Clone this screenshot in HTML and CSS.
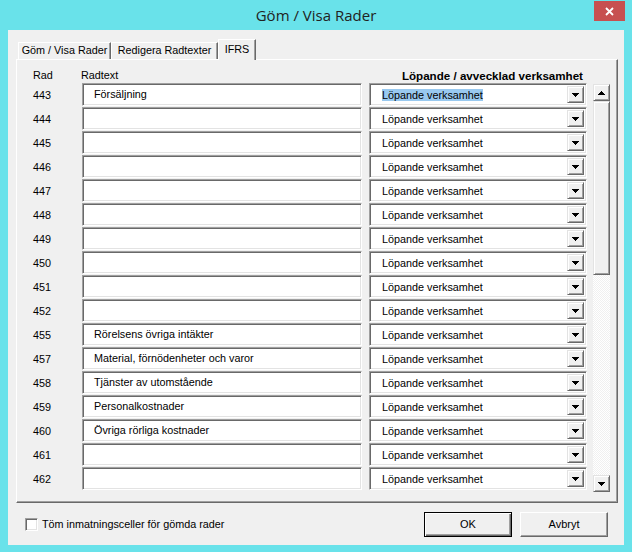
FILE: index.html
```html
<!DOCTYPE html>
<html lang="sv">
<head>
<meta charset="utf-8">
<title>Göm / Visa Rader</title>
<link rel="stylesheet" href="styles.css">
</head>
<body>
<div class="window">
  <div class="titlebar">
    <span class="tb-spacer"></span>
    <div class="title">Göm / Visa Rader</div>
    <div class="tb-right">
      <button class="close" aria-label="Stäng">
        <svg width="9" height="9" viewBox="0 0 9 9"><path d="M1 1L8 8M8 1L1 8" stroke="#fff" stroke-width="1.8" fill="none"/></svg>
      </button>
    </div>
  </div>
  <div class="client">
    <div class="tabs">
      <div class="tab t1">Göm / Visa Rader</div>
      <div class="tab t2">Redigera Radtexter</div>
      <div class="tab t3 active">IFRS</div>
    </div>
    <div class="panel">
      <div class="list">
        <div class="head">
          <span class="h-num">Rad</span>
          <span class="h-txt">Radtext</span>
          <span class="h-dd">Löpande / avvecklad verksamhet</span>
        </div>
        <div class="row"><span class="num">443</span><div class="txt">Försäljning</div><div class="dd"><span class="dd-text"><span class="sel">Löpande verksamhet</span></span><span class="dd-btn"><svg width="7" height="4" viewBox="0 0 7 4" shape-rendering="crispEdges"><path d="M0 0h7v1H0zM1 1h5v1H1zM2 2h3v1H2zM3 3h1v1H3z"/></svg></span></div></div>
        <div class="row"><span class="num">444</span><div class="txt"></div><div class="dd"><span class="dd-text">Löpande verksamhet</span><span class="dd-btn"><svg width="7" height="4" viewBox="0 0 7 4" shape-rendering="crispEdges"><path d="M0 0h7v1H0zM1 1h5v1H1zM2 2h3v1H2zM3 3h1v1H3z"/></svg></span></div></div>
        <div class="row"><span class="num">445</span><div class="txt"></div><div class="dd"><span class="dd-text">Löpande verksamhet</span><span class="dd-btn"><svg width="7" height="4" viewBox="0 0 7 4" shape-rendering="crispEdges"><path d="M0 0h7v1H0zM1 1h5v1H1zM2 2h3v1H2zM3 3h1v1H3z"/></svg></span></div></div>
        <div class="row"><span class="num">446</span><div class="txt"></div><div class="dd"><span class="dd-text">Löpande verksamhet</span><span class="dd-btn"><svg width="7" height="4" viewBox="0 0 7 4" shape-rendering="crispEdges"><path d="M0 0h7v1H0zM1 1h5v1H1zM2 2h3v1H2zM3 3h1v1H3z"/></svg></span></div></div>
        <div class="row"><span class="num">447</span><div class="txt"></div><div class="dd"><span class="dd-text">Löpande verksamhet</span><span class="dd-btn"><svg width="7" height="4" viewBox="0 0 7 4" shape-rendering="crispEdges"><path d="M0 0h7v1H0zM1 1h5v1H1zM2 2h3v1H2zM3 3h1v1H3z"/></svg></span></div></div>
        <div class="row"><span class="num">448</span><div class="txt"></div><div class="dd"><span class="dd-text">Löpande verksamhet</span><span class="dd-btn"><svg width="7" height="4" viewBox="0 0 7 4" shape-rendering="crispEdges"><path d="M0 0h7v1H0zM1 1h5v1H1zM2 2h3v1H2zM3 3h1v1H3z"/></svg></span></div></div>
        <div class="row"><span class="num">449</span><div class="txt"></div><div class="dd"><span class="dd-text">Löpande verksamhet</span><span class="dd-btn"><svg width="7" height="4" viewBox="0 0 7 4" shape-rendering="crispEdges"><path d="M0 0h7v1H0zM1 1h5v1H1zM2 2h3v1H2zM3 3h1v1H3z"/></svg></span></div></div>
        <div class="row"><span class="num">450</span><div class="txt"></div><div class="dd"><span class="dd-text">Löpande verksamhet</span><span class="dd-btn"><svg width="7" height="4" viewBox="0 0 7 4" shape-rendering="crispEdges"><path d="M0 0h7v1H0zM1 1h5v1H1zM2 2h3v1H2zM3 3h1v1H3z"/></svg></span></div></div>
        <div class="row"><span class="num">451</span><div class="txt"></div><div class="dd"><span class="dd-text">Löpande verksamhet</span><span class="dd-btn"><svg width="7" height="4" viewBox="0 0 7 4" shape-rendering="crispEdges"><path d="M0 0h7v1H0zM1 1h5v1H1zM2 2h3v1H2zM3 3h1v1H3z"/></svg></span></div></div>
        <div class="row"><span class="num">452</span><div class="txt"></div><div class="dd"><span class="dd-text">Löpande verksamhet</span><span class="dd-btn"><svg width="7" height="4" viewBox="0 0 7 4" shape-rendering="crispEdges"><path d="M0 0h7v1H0zM1 1h5v1H1zM2 2h3v1H2zM3 3h1v1H3z"/></svg></span></div></div>
        <div class="row"><span class="num">455</span><div class="txt">Rörelsens övriga intäkter</div><div class="dd"><span class="dd-text">Löpande verksamhet</span><span class="dd-btn"><svg width="7" height="4" viewBox="0 0 7 4" shape-rendering="crispEdges"><path d="M0 0h7v1H0zM1 1h5v1H1zM2 2h3v1H2zM3 3h1v1H3z"/></svg></span></div></div>
        <div class="row"><span class="num">457</span><div class="txt">Material, förnödenheter och varor</div><div class="dd"><span class="dd-text">Löpande verksamhet</span><span class="dd-btn"><svg width="7" height="4" viewBox="0 0 7 4" shape-rendering="crispEdges"><path d="M0 0h7v1H0zM1 1h5v1H1zM2 2h3v1H2zM3 3h1v1H3z"/></svg></span></div></div>
        <div class="row"><span class="num">458</span><div class="txt">Tjänster av utomstående</div><div class="dd"><span class="dd-text">Löpande verksamhet</span><span class="dd-btn"><svg width="7" height="4" viewBox="0 0 7 4" shape-rendering="crispEdges"><path d="M0 0h7v1H0zM1 1h5v1H1zM2 2h3v1H2zM3 3h1v1H3z"/></svg></span></div></div>
        <div class="row"><span class="num">459</span><div class="txt">Personalkostnader</div><div class="dd"><span class="dd-text">Löpande verksamhet</span><span class="dd-btn"><svg width="7" height="4" viewBox="0 0 7 4" shape-rendering="crispEdges"><path d="M0 0h7v1H0zM1 1h5v1H1zM2 2h3v1H2zM3 3h1v1H3z"/></svg></span></div></div>
        <div class="row"><span class="num">460</span><div class="txt">Övriga rörliga kostnader</div><div class="dd"><span class="dd-text">Löpande verksamhet</span><span class="dd-btn"><svg width="7" height="4" viewBox="0 0 7 4" shape-rendering="crispEdges"><path d="M0 0h7v1H0zM1 1h5v1H1zM2 2h3v1H2zM3 3h1v1H3z"/></svg></span></div></div>
        <div class="row"><span class="num">461</span><div class="txt"></div><div class="dd"><span class="dd-text">Löpande verksamhet</span><span class="dd-btn"><svg width="7" height="4" viewBox="0 0 7 4" shape-rendering="crispEdges"><path d="M0 0h7v1H0zM1 1h5v1H1zM2 2h3v1H2zM3 3h1v1H3z"/></svg></span></div></div>
        <div class="row"><span class="num">462</span><div class="txt"></div><div class="dd"><span class="dd-text">Löpande verksamhet</span><span class="dd-btn"><svg width="7" height="4" viewBox="0 0 7 4" shape-rendering="crispEdges"><path d="M0 0h7v1H0zM1 1h5v1H1zM2 2h3v1H2zM3 3h1v1H3z"/></svg></span></div></div>
      </div>
      <div class="scrollbar">
        <span class="sb-btn"><svg width="7" height="4" viewBox="0 0 7 4" shape-rendering="crispEdges"><path d="M3 0h1v1H3zM2 1h3v1H2zM1 2h5v1H1zM0 3h7v1H0z"/></svg></span>
        <span class="sb-thumb"></span>
        <span class="sb-track"></span>
        <span class="sb-btn"><svg width="7" height="4" viewBox="0 0 7 4" shape-rendering="crispEdges"><path d="M0 0h7v1H0zM1 1h5v1H1zM2 2h3v1H2zM3 3h1v1H3z"/></svg></span>
      </div>
    </div>
    <div class="footer">
      <label class="check"><span class="box"></span>Töm inmatningsceller för gömda rader</label>
      <div class="buttons">
        <button class="btn default">OK</button>
        <button class="btn">Avbryt</button>
      </div>
    </div>
  </div>
</div>
</body>
</html>
```

FILE: styles.css
```css
* { box-sizing: border-box; }
html, body { margin: 0; padding: 0; }
body {
  width: 632px;
  height: 552px;
  overflow: hidden;
  font-family: "Liberation Sans", Arial, sans-serif;
  font-size: 10.8px;
  color: #000;
}
.window {
  width: 632px;
  height: 552px;
  background: #69e2ea;
  display: flex;
  flex-direction: column;
}
.titlebar {
  height: 30px;
  display: grid;
  grid-template-columns: 1fr auto 1fr;
  align-items: start;
}
.title {
  font-family: "Open Sans", "Noto Sans", sans-serif;
  font-size: 15px;
  line-height: 30px;
  color: #222;
}
.tb-right { display: flex; justify-content: flex-end; }
.close {
  margin: 1px 7px 0 0;
  width: 31px;
  height: 20px;
  border: 0;
  padding: 0;
  background: #c75050;
  display: flex;
  align-items: center;
  justify-content: center;
}
.client {
  flex: 1;
  margin: 0 8px 7px 8px;
  background: #f0f0f0;
  display: flex;
  flex-direction: column;
}
.tabs {
  display: flex;
  align-items: flex-end;
  margin-top: 9px;
  padding-left: 10px;
  height: 20px;
}
.tab {
  height: 17px;
  line-height: 15px;
  text-align: center;
  background: #f0f0f0;
  border-top: 1px solid #fff;
  border-left: 1px solid #fff;
  border-right: 1px solid #696969;
  box-shadow: inset -1px 0 #a0a0a0;
  white-space: nowrap;
}
.t1 { width: 93px; }
.t2 { width: 107px; }
.t3 { width: 38px; }
.tab.active {
  height: 21px;
  line-height: 18px;
  margin-bottom: -1px;
  position: relative;
  z-index: 1;
  border-bottom: 0;
}
.panel {
  display: flex;
  align-items: flex-start;
  margin: 0 6px 0 8px;
  padding: 7px 7px 10px 16px;
  border: 1px solid;
  border-color: #fff #696969 #696969 #fff;
  box-shadow: inset -1px -1px #a0a0a0;
}
.list { display: flex; flex-direction: column; }
.head {
  height: 16px;
  display: flex;
  align-items: center;
}
.h-num { width: 48px; }
.h-txt { width: 287px; }
.h-dd {
  width: 218px;
  text-align: right;
  padding-right: 3px;
  font-weight: bold;
  font-size: 11.6px;
}
.row {
  display: flex;
  align-items: center;
  height: 23px;
  margin-bottom: 1px;
}
.num { width: 49px; }
.txt, .dd {
  height: 23px;
  background: #fff;
  border: 1px solid;
  border-color: #a0a0a0 #fff #fff #a0a0a0;
  box-shadow: inset 1px 1px #696969, inset -1px -1px #e3e3e3;
}
.txt {
  width: 280px;
  margin-right: 7px;
  padding-left: 11px;
  line-height: 21px;
  white-space: nowrap;
}
.dd {
  width: 218px;
  display: flex;
  align-items: stretch;
  padding: 2px 2px 2px 12px;
}
.dd-text {
  flex: 1;
  line-height: 18px;
  white-space: nowrap;
}
.sel { background: #99c9ef; }
.dd-btn, .sb-btn, .sb-thumb {
  background: #f0f0f0;
  border: 1px solid;
  border-color: #e3e3e3 #696969 #696969 #e3e3e3;
  box-shadow: inset 1px 1px #fff, inset -1px -1px #a0a0a0;
}
.dd-btn {
  width: 17px;
  display: flex;
  align-items: center;
  justify-content: center;
  padding-top: 1px;
}
.dd-btn svg, .sb-btn svg { display: block; }
.scrollbar {
  margin-top: 17px;
  margin-left: 6px;
  width: 17px;
  height: 408px;
  display: flex;
  flex-direction: column;
}
.sb-btn {
  height: 17px;
  display: flex;
  align-items: center;
  justify-content: center;
}
.sb-thumb { height: 174px; }
.sb-track {
  flex: 1;
  background: repeating-conic-gradient(#fff 0 25%, #f0f0f0 0 50%) 0 0 / 2px 2px;
}
.footer {
  flex: 1;
  display: flex;
  align-items: center;
  justify-content: space-between;
  padding: 0 16px 0 17px;
}
.check {
  display: flex;
  align-items: center;
  gap: 4px;
}
.box {
  width: 13px;
  height: 13px;
  background: #fff;
  border: 1px solid;
  border-color: #a0a0a0 #fff #fff #a0a0a0;
  box-shadow: inset 1px 1px #696969, inset -1px -1px #e3e3e3;
}
.buttons { display: flex; gap: 8px; }
.btn {
  width: 88px;
  height: 25px;
  font-family: "Liberation Sans", Arial, sans-serif;
  font-size: 11px;
  color: #000;
  background: #f0f0f0;
  padding: 0;
  border: 1px solid;
  border-color: #fff #696969 #696969 #fff;
  box-shadow: inset -1px -1px #a0a0a0;
}
.btn.default {
  border: 1px solid #000;
  box-shadow: inset 1px 1px #fff, inset -1px -1px #696969, inset -2px -2px #a0a0a0;
}
```
